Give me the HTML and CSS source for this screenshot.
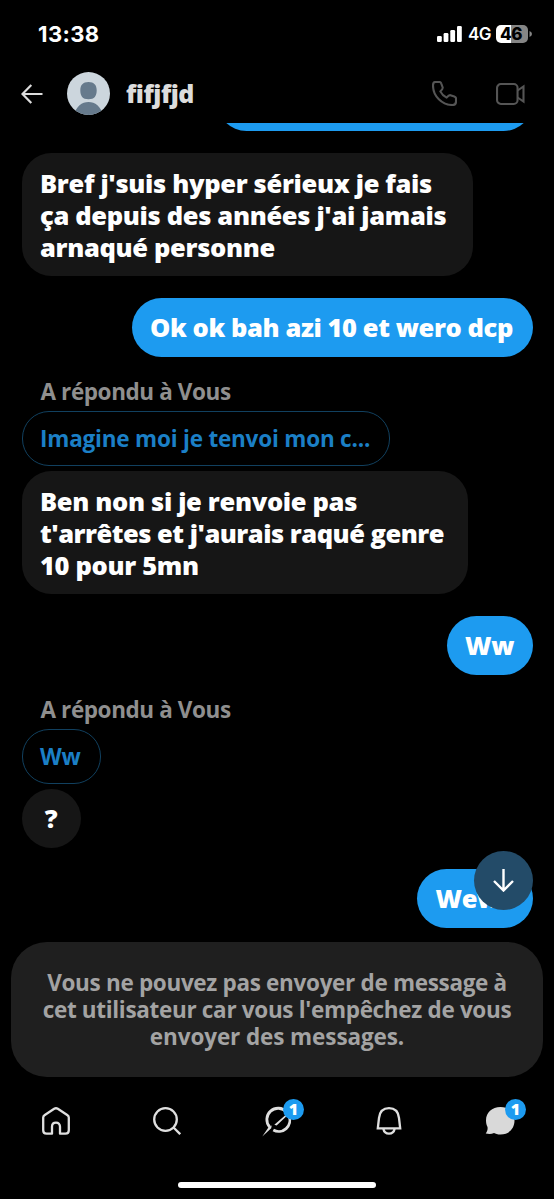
FILE: index.html
```html
<!DOCTYPE html>
<html lang="fr">
<head>
<meta charset="utf-8">
<title>Messages</title>
<link rel="stylesheet" href="styles.css">
</head>
<body>
<div class="phone">
  <div class="status">
    <span class="time">13:38</span>
    <div class="signals">
      <svg class="bars" width="25" height="16" viewBox="0 0 25 16" fill="#fff"><rect x="0" y="10" width="4.8" height="6" rx="1.3"/><rect x="6.6" y="7" width="4.8" height="9" rx="1.3"/><rect x="13.3" y="4" width="4.8" height="12" rx="1.3"/><rect x="20" y="0" width="4.8" height="16" rx="1.3"/></svg>
      <span class="network">4G</span>
      <span class="battery">46</span>
      <svg width="3" height="6" viewBox="0 0 3 6"><path d="M.5 0Q3 1 3 3T.5 6Z" fill="#858585"/></svg>
    </div>
  </div>
  <header class="header">
    <svg class="back" width="22" height="20" viewBox="0 0 22 20" fill="none" stroke="#dcdcdc" stroke-width="2.2"><path d="M10.3 1 1.500 10l8.800 9M1.500 10H21.500"/></svg>
    <svg class="avatar" width="43" height="43" viewBox="0 0 43 43"><defs><clipPath id="disc"><circle cx="21.500" cy="21.500" r="21.500"/></clipPath></defs><g clip-path="url(#disc)"><path fill="#ccd6dd" d="M0 0h43v43H0z"/><path fill="#667a8c" d="M21.500 10c5.500 0 8.200 3 8.200 8.300 0 5.700-2.200 9-8.200 9s-8.200-3.300-8.200-9c0-5.300 2.700-8.300 8.200-8.300ZM7 43c2-8.500 8-13 14.500-13S34 34.500 36 43Z"/></g></svg>
    <span class="name">fifjfjd</span>
    <svg class="call" width="25" height="25" viewBox="0 0 25 25" fill="none" stroke="#555" stroke-width="2.100" stroke-linejoin="round"><path d="M3.500 1 7.500 1C8.600 1 9 1.700 9.300 2.600L10.700 6.500C11 7.500 10.500 8.300 8.300 10.400 9.700 13.200 11.700 15.200 14.600 16.600 16.500 14.400 17.200 13.900 18.400 14.200L22.300 15.500C23.400 15.900 24 16.300 24 17.400V20.600C24 22.900 22.800 24 20.500 24 10 24 1 15 1 4.400 1 2.300 1.700 1 3.500 1Z"/></svg>
    <svg width="29" height="22" viewBox="0 0 29 22" fill="none" stroke="#555" stroke-width="2.100"><rect x="1.050" y="1.050" width="20.500" height="19.900" rx="3.800"/><path d="M21.600 7.500 27.500 3.500V18.500L21.600 14.500"/></svg>
  </header>
  <main class="chat">
    <div class="bubble sent previous"></div>
    <div class="bubble received first"><span class="line">Bref j'suis hyper sérieux je fais</span><span class="line">ça depuis des années j'ai jamais</span><span class="line">arnaqué personne</span></div>
    <div class="bubble sent offer">Ok ok bah azi 10 et wero dcp</div>
    <div class="reply">A répondu à Vous</div>
    <div class="quote long">Imagine moi je tenvoi mon c...</div>
    <div class="bubble received second"><span class="line">Ben non si je renvoie pas</span><span class="line tight">t'arrêtes et j'aurais raqué genre</span><span class="line">10 pour 5mn</span></div>
    <div class="bubble sent short">Ww</div>
    <div class="reply">A répondu à Vous</div>
    <div class="quote brief">Ww</div>
    <div class="bubble received mark">?</div>
    <div class="bubble sent last">Wew<div class="scroll"><svg width="21" height="23" viewBox="0 0 21 23" fill="none" stroke="#fff" stroke-width="2.400"><path d="M10.500 0V21.500M1 12l9.500 9.500L20 12"/></svg></div></div>
  </main>
  <div class="notice"><span class="line">Vous ne pouvez pas envoyer de message à</span><span class="line">cet utilisateur car vous l'empêchez de vous</span><span class="line closing">envoyer des messages.</span></div>
  <nav class="nav">
    <div class="tab"><svg width="28" height="28" viewBox="0 0 28 28" fill="none" stroke="#dfdfdf" stroke-width="2.300" stroke-linejoin="round"><path d="M1.200 10.600C1.200 9.300 1.700 8.700 2.800 8L12.200 1.800C13.500.95 14.500.95 15.800 1.800L25.200 8C26.300 8.700 26.800 9.300 26.800 10.600V23.300C26.800 25.600 25.600 26.700 23.400 26.700H18V19.700C18 17.200 16.500 15.700 14 15.700S10 17.200 10 19.700V26.700H4.600C2.400 26.700 1.200 25.600 1.200 23.300Z"/></svg></div>
    <div class="tab"><svg width="28" height="28" viewBox="0 0 28 28" fill="none" stroke="#dfdfdf" stroke-width="2.300"><circle cx="12.500" cy="12.500" r="11.300"/><path d="m20.500 20.500 6.700 6.700"/></svg></div>
    <div class="tab"><svg width="32" height="32" viewBox="0 0 32 32"><path d="M7.700 22A11.200 11.200 0 0 1 24.500 7M27 11A11.200 11.200 0 0 1 11.300 25.100" fill="none" stroke="#dfdfdf" stroke-width="2.800"/><path fill="#dfdfdf" d="M.3 31.500 6.700 22 9.700 20.500 9.200 23.200ZM12.300 19.700 23 10.500 29 3.500 25 10.800 14.600 20.500Z"/></svg><span class="badge">1</span></div>
    <div class="tab"><svg width="26" height="28" viewBox="0 0 26 28" fill="none" stroke="#dfdfdf" stroke-width="2.300"><path d="M1.800 21.400H24.200L23 11C22.300 4.800 18.600 1.200 13 1.200S3.700 4.800 3 11ZM7.300 21.700C8 25 10 26.600 13 26.600S18 25 18.700 21.700"/></svg></div>
    <div class="tab"><svg width="30" height="28" viewBox="0 0 30 28"><path fill="#d9d9d9" d="M15.500 0C24 0 29.500 5.500 29.500 13.500S24 27.500 15.500 27.500C12.500 27.500 10.500 26.800 9 26 6.700 27.200 4 27.300.7 26.600 2.200 24.600 2.900 22.300 2.500 20 1.500 18 1 16 1 13.500 1 5.500 7 0 15.500 0Z"/></svg><span class="badge">1</span></div>
  </nav>
  <div class="indicator"></div>
</div>
</body>
</html>
```
FILE: styles.css
```css
* { box-sizing: border-box; }
body { margin: 0; background: #000; }
svg { display: block; flex: none; }
.phone {
  width: 554px; height: 1199px; overflow: hidden;
  display: flex; flex-direction: column;
  background: #000; color: #fff;
  font-family: "Open Sans", "Noto Sans", sans-serif; font-weight: 700;
  white-space: nowrap;
}
.line { display: block; }
.status {
  height: 64px; flex: none; padding: 3px 22px 0 38px;
  display: flex; align-items: center; justify-content: space-between;
  font-family: Inter, sans-serif;
}
.time { font-size: 22px; letter-spacing: .4px; font-weight: 700; }
.signals { display: flex; align-items: center; }
.network { margin: 1px 6px 0 6px; width: 22px; font-size: 17px; font-weight: 600; letter-spacing: -.5px; }
.battery {
  width: 32px; height: 18px; margin-right: 1px; padding-right: 2px; border-radius: 5px;
  background: linear-gradient(90deg, #fff 47%, #858585 47%);
  color: #000; font-size: 17px; line-height: 18px; text-align: center; font-weight: 800; letter-spacing: -.4px;
}
.header { height: 59px; flex: none; padding: 0 29px 0 21px; display: flex; align-items: center; }
.avatar { margin-left: 24px; }
.name { margin: -2px 0 0 16px; flex: 1; color: #dcdcdc; font-size: 25px; line-height: 32px; font-weight: 800; letter-spacing: -.5px; }
.call { margin-right: 39px; }
.chat {
  height: 819px; flex: none; overflow: hidden; padding: 0 21.500px;
  display: flex; flex-direction: column; align-items: flex-start;
}
.bubble {
  flex: none; padding: 14px 18.500px 13px; border-radius: 29.500px;
  font-size: 25.500px; line-height: 32px; font-weight: 800; letter-spacing: -.33px;
}
.received { background: #161616; }
.sent { height: 59px; padding-top: 13px; background: #1d9bf0; align-self: flex-end; }
.previous { width: 316px; margin-top: -51px; }
.first { width: 451px; height: 123px; margin-top: 22px; }
.offer { width: 401px; margin-top: 22px; letter-spacing: -.4px; }
.reply { height: 32px; margin: 19px 0 0 19px; color: #8f8f8f; font-size: 22.500px; line-height: 32px; letter-spacing: -.4px; }
.quote {
  height: 55px; flex: none; margin-top: 3px; padding: 11px 17.500px; border: 1.500px solid #11405f; border-radius: 27px;
  color: #1b7fc6; font-size: 22.500px; line-height: 31px; letter-spacing: -.2px;
}
.long { width: 368.500px; }
.brief { width: 79.500px; }
.second { width: 446.500px; height: 123px; margin-top: 5px; }
.tight { letter-spacing: -.5px; }
.short { width: 86px; margin-top: 22px; }
.mark { width: 59px; height: 59px; margin-top: 5px; padding: 13px 0 0; text-align: center; }
.last { position: relative; width: 115.500px; margin-top: 21px; }
.scroll {
  position: absolute; right: 0; top: -18px; width: 59px; height: 59px;
  display: flex; align-items: center; justify-content: center;
  border-radius: 50%; background: #234b68;
}
.notice {
  height: 135px; flex: none; margin: 0 11px; padding: 27px 0; border-radius: 36px;
  background: #1f1f1f; color: #a3a3a3; text-align: center; font-size: 22.500px; line-height: 27px; letter-spacing: -.32px;
}
.closing { letter-spacing: -.1px; }
.nav { height: 88px; flex: none; padding-left: 1px; display: grid; grid-template-columns: repeat(5, 111px); justify-content: center; align-items: center; }
.tab { position: relative; height: 88px; display: flex; align-items: center; justify-content: center; }
.badge {
  position: absolute; left: 61px; top: 22px; width: 21px; height: 21px; border-radius: 50%;
  background: #1d9bf0; color: #fff; font-size: 16px; line-height: 21px; text-align: center; font-weight: 800;
}
.indicator { width: 198px; height: 6px; margin: 17px auto 0; border-radius: 3px; background: #fff; }
```
